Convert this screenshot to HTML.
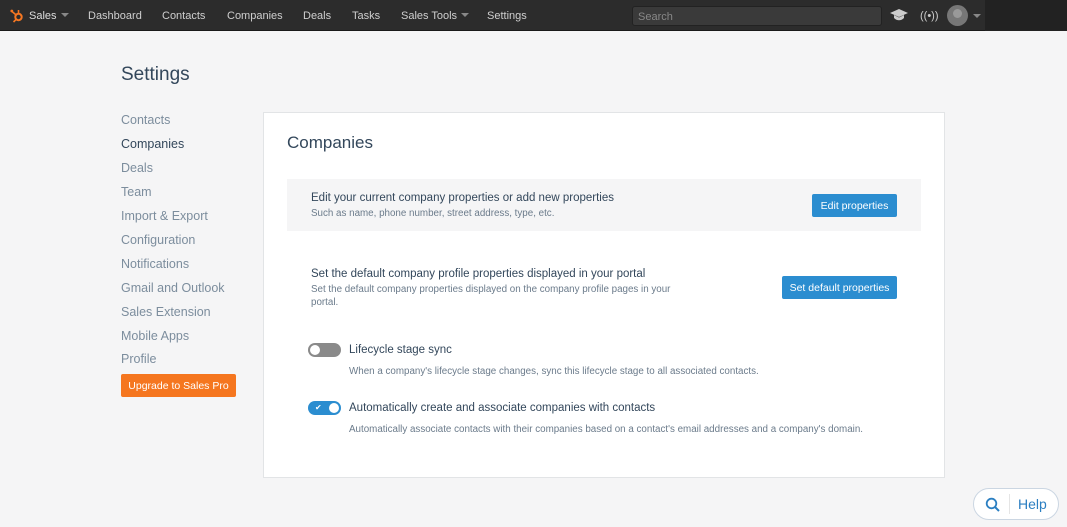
<!DOCTYPE html>
<html><head><style>
*{margin:0;padding:0;box-sizing:border-box}
body{width:1067px;height:527px;background:#f5f5f6;font-family:"Liberation Sans",sans-serif;position:relative;overflow:hidden;color:#33475b}
.nav{position:absolute;left:0;top:0;width:1067px;height:31px;background:#2c2c2c;border-bottom:1px solid #1a1a1a}
.nav .dark{position:absolute;left:985px;top:0;width:82px;height:31px;background:#222}
.nav span{position:absolute;top:10px;font-size:11px;color:#cfcfcf}
.caret{display:inline-block;border:4px solid transparent;border-top:4px solid #888;margin-left:4px;vertical-align:-2px}
.search{position:absolute;left:632px;top:6px;width:250px;height:20px;background:#3a3a3a;border:1px solid #222;border-radius:3px;color:#888;font-size:11px;padding:4px 5px}
.a{position:absolute;font-size:12.5px;color:#7c8d9d}
.card{position:absolute;left:263px;top:112px;width:682px;height:366px;background:#fff;border:1px solid #e2e4e6}
.btn{position:absolute;background:#2b8dd0;color:#fff;font-size:10.5px;border-radius:2px;text-align:center;line-height:23px;height:23px;padding-top:1px}
.t{position:absolute;font-size:11.5px;color:#33475b}
.s{position:absolute;font-size:9.8px;color:#6b7b8b;line-height:13px}
.tog{position:absolute;width:33px;height:14px;border-radius:7px}
.tog i{position:absolute;top:2px;width:10px;height:10px;border-radius:50%;background:#fff}
</style></head><body>
<div class="nav"><div class="dark"></div>
<svg style="position:absolute;left:9px;top:7px" width="16" height="16" viewBox="0 0 16 16"><circle cx="9.5" cy="10" r="3.2" fill="none" stroke="#f57722" stroke-width="2"/><path d="M9.5 6.8V3M7.2 8 3 4.5M7 12.5 4.5 15" stroke="#f57722" stroke-width="1.6"/><circle cx="2.8" cy="4" r="1.4" fill="#f57722"/></svg>
<span style="left:29px;color:#ddd">Sales<i class="caret"></i></span>
<span style="left:88px">Dashboard</span><span style="left:162px">Contacts</span><span style="left:227px">Companies</span><span style="left:303px">Deals</span><span style="left:352px">Tasks</span><span style="left:401px">Sales Tools<i class="caret"></i></span><span style="left:487px">Settings</span>
<div class="search">Search</div>
<svg style="position:absolute;left:890px;top:9px" width="18" height="12" viewBox="0 0 18 12"><path d="M9 0 18 4 9 8 0 4Z" fill="#ccc"/><path d="M4 6v3c3 3 7 3 10 0V6L9 8.5Z" fill="#ccc"/></svg>
<span style="left:920px;font-size:11px;top:10px;color:#ccc">((•))</span>
<div style="position:absolute;left:947px;top:5px;width:21px;height:21px;border-radius:50%;background:#777"><div style="position:absolute;left:6px;top:4px;width:9px;height:9px;border-radius:50%;background:#999"></div></div>
<i class="caret" style="position:absolute;left:969px;top:14px"></i>
</div>
<div style="position:absolute;left:121px;top:64px;font-size:19px;color:#33475b">Settings</div>
<div class="a" style="left:121px;top:113px">Contacts</div>
<div class="a" style="left:121px;top:137px;color:#33475b">Companies</div>
<div class="a" style="left:121px;top:161px">Deals</div>
<div class="a" style="left:121px;top:185px">Team</div>
<div class="a" style="left:121px;top:209px">Import &amp; Export</div>
<div class="a" style="left:121px;top:233px">Configuration</div>
<div class="a" style="left:121px;top:257px">Notifications</div>
<div class="a" style="left:121px;top:281px">Gmail and Outlook</div>
<div class="a" style="left:121px;top:305px">Sales Extension</div>
<div class="a" style="left:121px;top:329px">Mobile Apps</div>
<div class="a" style="left:121px;top:352px">Profile</div>
<div class="btn" style="left:121px;top:374px;width:115px;background:#f5761f">Upgrade to Sales Pro</div>
<div class="card"></div>
<div style="position:absolute;left:287px;top:133px;font-size:17px;color:#33475b">Companies</div>
<div style="position:absolute;left:287px;top:179px;width:634px;height:52px;background:#f5f5f6"></div>
<div class="t" style="left:311px;top:192px">Edit your current company properties or add new properties</div>
<div class="s" style="left:311px;top:207px">Such as name, phone number, street address, type, etc.</div>
<div class="btn" style="left:812px;top:194px;width:85px">Edit properties</div>
<div class="t" style="left:311px;top:268px">Set the default company profile properties displayed in your portal</div>
<div class="s" style="left:311px;top:283px;width:370px">Set the default company properties displayed on the company profile pages in your portal.</div>
<div class="btn" style="left:782px;top:276px;width:115px">Set default properties</div>
<div class="tog" style="left:308px;top:343px;background:#8a8a8a"><i style="left:2px"></i></div>
<div class="t" style="left:349px;top:344px">Lifecycle stage sync</div>
<div class="s" style="left:349px;top:365px">When a company's lifecycle stage changes, sync this lifecycle stage to all associated contacts.</div>
<div class="tog" style="left:308px;top:401px;background:#2b8dd0"><i style="left:21px"></i><span style="position:absolute;left:7px;top:2px;color:#fff;font-size:8px">✔</span></div>
<div class="t" style="left:349px;top:402px">Automatically create and associate companies with contacts</div>
<div class="s" style="left:349px;top:423px">Automatically associate contacts with their companies based on a contact's email addresses and a company's domain.</div>
<div style="position:absolute;left:973px;top:488px;width:86px;height:32px;border:1px solid #cbd6e2;border-radius:16px;background:#fff">
<svg style="position:absolute;left:11px;top:8px" width="16" height="16" viewBox="0 0 16 16"><circle cx="6.5" cy="6.5" r="4.8" fill="none" stroke="#2b7fc2" stroke-width="1.8"/><path d="M10 10 14 14" stroke="#2b7fc2" stroke-width="2"/></svg>
<div style="position:absolute;left:35px;top:5px;width:1px;height:20px;background:#e5e5e5"></div>
<span style="position:absolute;left:44px;top:7px;font-size:14px;color:#2b7fc2">Help</span></div>
</body></html>
